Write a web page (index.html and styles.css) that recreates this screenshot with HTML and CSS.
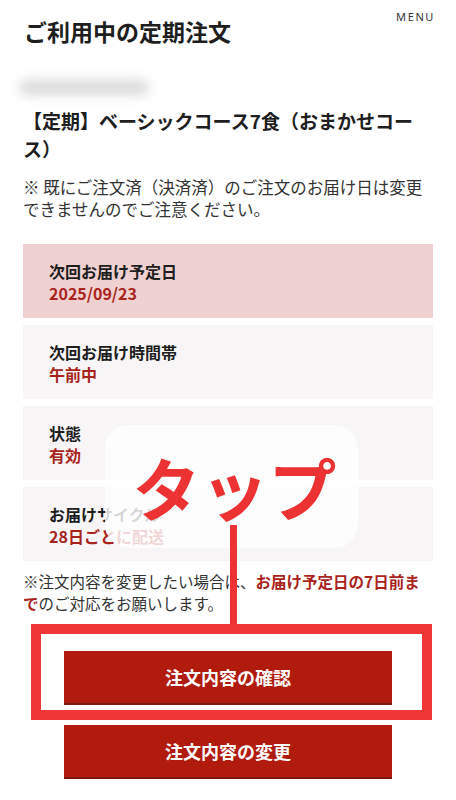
FILE: index.html
```html
<!DOCTYPE html>
<html lang="ja">
<head>
<meta charset="utf-8">
<title>ご利用中の定期注文</title>
<link rel="stylesheet" href="styles.css">
</head>
<body>
<div class="page">
  <header class="header">
    <h1 class="title">ご利用中の定期注文</h1>
    <span class="menu">MENU</span>
  </header>
  <div class="blurred"></div>
  <h2 class="product">【定期】ベーシックコース7食（おまかせコース）</h2>
  <p class="note">※ 既にご注文済（決済済）のご注文のお届け日は変更できませんのでご注意ください。</p>
  <ul class="cards">
    <li class="card card-hl"><span class="label">次回お届け予定日</span><span class="value">2025/09/23</span></li>
    <li class="card"><span class="label">次回お届け時間帯</span><span class="value">午前中</span></li>
    <li class="card"><span class="label">状態</span><span class="value">有効</span></li>
    <li class="card"><span class="label">お届けサイクル</span><span class="value">28日ごとに配送</span></li>
  </ul>
  <p class="note2">※注文内容を変更したい場合は、<strong>お届け予定日の7日前まで</strong>のご対応をお願いします。</p>
  <div class="actions">
    <button class="btn">注文内容の確認</button>
    <button class="btn">注文内容の変更</button>
  </div>
</div>
<div class="tap-bubble"><span class="tap-text">タップ</span></div>
<div class="tap-line"></div>
<div class="tap-frame"></div>
</body>
</html>
```

FILE: styles.css
```css
* { box-sizing: border-box; }
html, body { margin: 0; padding: 0; background: #fff; }
body {
  font-family: "Noto Sans CJK JP", "Noto Sans", sans-serif;
  color: #222;
  width: 456px;
  height: 800px;
  position: relative;
  overflow: hidden;
}
.page { padding: 0 23px; }
.header {
  display: flex;
  justify-content: space-between;
  align-items: flex-start;
  padding-top: 10px;
}
.title {
  margin: 2px 0 0 1px;
  font-size: 23px;
  line-height: 38px;
  font-weight: 700;
  color: #1e1e1e;
}
.menu {
  font-family: "Noto Sans", sans-serif;
  font-size: 11px;
  line-height: 14px;
  letter-spacing: 1.6px;
  color: #333;
  margin-right: -2px;
}
.blurred {
  margin: 30px 0 0 -4px;
  width: 130px;
  height: 15px;
  background: #d9d9d9;
  border-radius: 8px;
  filter: blur(6px);
}
.product {
  margin: 12px 0 0;
  font-size: 19px;
  line-height: 28px;
  font-weight: 700;
  color: #1e1e1e;
}
.note {
  margin: 13px 0 0;
  font-size: 16.5px;
  line-height: 22px;
  color: #333;
}
.cards {
  list-style: none;
  margin: 24px 0 0;
  padding: 0;
  display: flex;
  flex-direction: column;
  gap: 7px;
}
.card {
  height: 74px;
  padding: 16px 26px 0;
  background: #f7f5f6;
  display: flex;
  flex-direction: column;
}
.card-hl { background: #f0d1d1; }
.label {
  font-size: 16px;
  line-height: 22px;
  font-weight: 700;
  color: #1e1e1e;
}
.value {
  font-size: 16px;
  line-height: 22px;
  font-weight: 700;
  color: #a9241c;
}
.note2 {
  margin: 9px 0 0;
  font-size: 15.5px;
  line-height: 22px;
  color: #333;
}
.note2 strong { color: #a9241c; font-weight: 700; }
.actions {
  margin-top: 37px;
  display: flex;
  flex-direction: column;
  align-items: center;
  gap: 20px;
}
.btn {
  width: 328px;
  height: 54px;
  border: 0;
  border-bottom: 2px solid #7d1a10;
  background: #b01b0d;
  color: #fff;
  font-family: "Noto Sans CJK JP", sans-serif;
  font-size: 18px;
  font-weight: 700;
  padding: 0;
}
.tap-bubble {
  position: absolute;
  left: 105px;
  top: 425px;
  width: 253px;
  height: 123px;
  border-radius: 24px;
  background: rgba(255, 255, 255, 0.82);
  display: flex;
  align-items: center;
  justify-content: center;
}
.tap-text {
  font-size: 68px;
  line-height: 1;
  font-weight: 700;
  color: #ec3232;
  margin-left: 6px;
}
.tap-line {
  position: absolute;
  left: 230px;
  top: 525px;
  width: 7px;
  height: 102px;
  background: #ec3232;
}
.tap-frame {
  position: absolute;
  left: 31px;
  top: 624px;
  width: 401px;
  height: 96px;
  border: 10px solid #f03636;
}
```
